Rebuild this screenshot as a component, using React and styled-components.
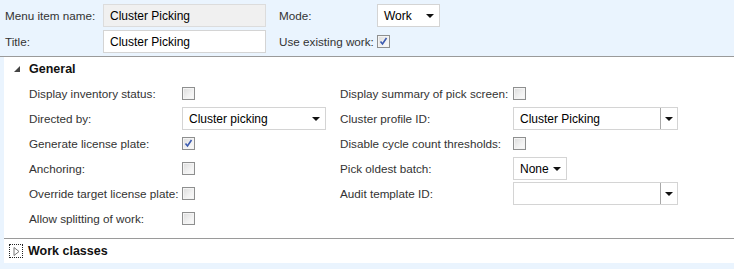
import React from 'react';
import styled, { createGlobalStyle } from 'styled-components';

const GlobalStyle = createGlobalStyle`
  html, body {
    margin: 0;
    padding: 0;
    background: #eaf4fe;
  }
  body {
    font-family: 'Liberation Sans', Arial, sans-serif;
    font-size: 12px;
    color: #1e1e1e;
  }
`;

const Page = styled.div`
  width: 734px;
  height: 269px;
  background: #eaf4fe;
  overflow: hidden;
`;

const TopForm = styled.div`
  display: grid;
  grid-template-columns: 98px 176px 98px auto;
  grid-auto-rows: 23px;
  row-gap: 3px;
  align-items: center;
  padding: 4px 0 3px 5px;
  border-bottom: 1px solid #9a9a9a;
`;

const Label = styled.span`
  color: #333;
  font-size: 11.7px;
  white-space: nowrap;
  line-height: 16px;
`;

const TextBox = styled.div`
  box-sizing: border-box;
  width: ${({ $w }) => $w}px;
  height: 23px;
  display: flex;
  align-items: center;
  padding-left: 6px;
  background: ${({ $disabled }) => ($disabled ? '#f0f0f0' : '#fff')};
  border: 1px solid ${({ $disabled }) => ($disabled ? '#dcdcdc' : '#d4d4d4')};
  color: #000;
  font-size: 12px;
  white-space: nowrap;
`;

const Select = styled(TextBox)`
  justify-content: space-between;
  padding-right: 5px;
`;

const Caret = styled.span`
  width: 0;
  height: 0;
  border-left: 4px solid transparent;
  border-right: 4px solid transparent;
  border-top: 4px solid #111;
`;

const ComboBox = styled(TextBox)`
  padding-right: 0;
  justify-content: space-between;
`;

const ComboButton = styled.span`
  box-sizing: border-box;
  width: 17px;
  height: 100%;
  display: flex;
  align-items: center;
  justify-content: center;
  border-left: 1px solid #a8a8a8;
`;

const Box = styled.span`
  box-sizing: border-box;
  width: 13px;
  height: 13px;
  border: 1px solid #8e8f8f;
  background: linear-gradient(135deg, #dcdcdc 0%, #f2f2f2 60%, #fbfbfb 100%);
  box-shadow: inset 0 0 0 1px #f4f4f4;
  display: flex;
  align-items: center;
  justify-content: center;
`;

const Check = ({ checked }) => (
  <Box>
    {checked && (
      <svg width="9" height="9" viewBox="0 0 9 9">
        <path d="M1.5 4.5 L3.5 7 L7.5 1" fill="none" stroke="#3c5bb0" strokeWidth="1.6" />
      </svg>
    )}
  </Box>
);

const Panel = styled.div`
  margin-left: 4px;
  background: #fff;
`;

const SectionHeader = styled.div`
  display: flex;
  align-items: center;
  height: 24px;
  padding-left: ${({ $pad }) => $pad}px;
  gap: ${({ $gap }) => $gap}px;
  font-size: 12.5px;
  font-weight: bold;
  color: #111;
`;

const FieldGrid = styled.div`
  display: grid;
  grid-template-columns: 153px 158px 173px auto;
  grid-auto-rows: 25px;
  align-items: center;
  padding: 0 0 7px 25px;
  border-bottom: 1px solid #9a9a9a;
`;

const Expander = styled.span`
  box-sizing: border-box;
  width: 14px;
  height: 14px;
  border: 1px dotted #222;
  display: flex;
  align-items: center;
  justify-content: center;
`;

const Cell = styled.div`
  display: flex;
  align-items: center;
`;

export default function App() {
  return (
    <Page>
      <GlobalStyle />
      <TopForm>
        <Label>Menu item name:</Label>
        <TextBox $w={163} $disabled>Cluster Picking</TextBox>
        <Label>Mode:</Label>
        <Select $w={63}>
          Work <Caret />
        </Select>
        <Label>Title:</Label>
        <TextBox $w={163}>Cluster Picking</TextBox>
        <Label>Use existing work:</Label>
        <Cell>
          <Check checked />
        </Cell>
      </TopForm>
      <Panel>
        <SectionHeader $pad={10} $gap={9}>
          <svg width="6" height="6" viewBox="0 0 6 6">
            <path d="M6 0 L6 6 L0 6 Z" fill="#444" />
          </svg>
          General
        </SectionHeader>
        <FieldGrid>
          <Label>Display inventory status:</Label>
          <Cell><Check /></Cell>
          <Label>Display summary of pick screen:</Label>
          <Cell><Check /></Cell>

          <Label>Directed by:</Label>
          <Select $w={144}>
            Cluster picking <Caret />
          </Select>
          <Label>Cluster profile ID:</Label>
          <ComboBox $w={165}>
            Cluster Picking
            <ComboButton><Caret /></ComboButton>
          </ComboBox>

          <Label>Generate license plate:</Label>
          <Cell><Check checked /></Cell>
          <Label>Disable cycle count thresholds:</Label>
          <Cell><Check /></Cell>

          <Label>Anchoring:</Label>
          <Cell><Check /></Cell>
          <Label>Pick oldest batch:</Label>
          <Select $w={54}>
            None <Caret />
          </Select>

          <Label>Override target license plate:</Label>
          <Cell><Check /></Cell>
          <Label>Audit template ID:</Label>
          <ComboBox $w={165}>
            <span />
            <ComboButton><Caret /></ComboButton>
          </ComboBox>

          <Label>Allow splitting of work:</Label>
          <Cell><Check /></Cell>
        </FieldGrid>
        <SectionHeader $pad={5} $gap={5}>
          <Expander>
            <svg width="7" height="9" viewBox="0 0 7 9">
              <path d="M1 0.5 L6 4.5 L1 8.5 Z" fill="none" stroke="#777" strokeWidth="1" />
            </svg>
          </Expander>
          Work classes
        </SectionHeader>
      </Panel>
    </Page>
  );
}
